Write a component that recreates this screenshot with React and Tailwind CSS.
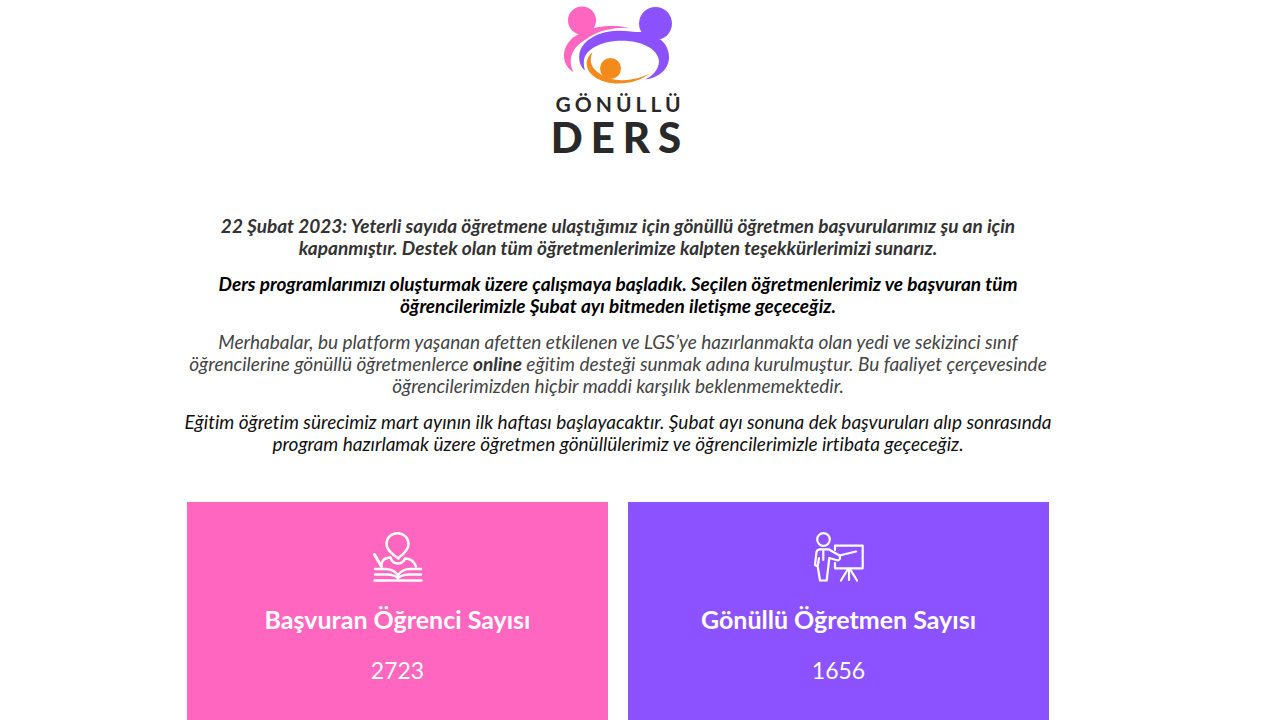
function LogoMark() {
  return (
    <svg viewBox="0 0 110 80" className="h-20 w-[110px]" aria-hidden="true">
      <g fill="#ff66c0">
        <circle cx="19" cy="16.500" r="14" />
        <path d="M10.500 68C4 64 0.500 58 1 50C2 42 6 35 16 30C24 24.500 38 22 48 22C56 22 61 22.500 65.500 23.700C58 23.500 50 24 42 26.300C32 29 26 33 19 38C10 44 4 55 10.500 68Z" />
      </g>
      <g fill="#8c52ff">
        <circle cx="92.500" cy="19.500" r="16.500" />
        <path d="M22 66.500C16.500 62 15 54 17 47C22 34 38 26.700 57 26.700C66 26.700 73 28.500 79 28L98 36C103 40 106.500 47 106 55C105 66 95 74 82 75.500C90 72 96 65 96 57C95 45 79 36.700 59 36.700C40 36.700 23 44 21 56C20.500 60 21 63 22 66.500Z" />
      </g>
      <g fill="#f28a1c">
        <circle cx="47.500" cy="64.500" r="10.500" />
        <path d="M29.300 48.500C25.500 58 29 65 38 70.500C44 74.500 52 76.500 60 76.200C71 75.800 80 73 87.500 69C79 75.500 68 79.500 55 79.500C38 79.500 24 71 23.700 60C23.600 55.500 26 51 29.300 48.500Z" />
      </g>
    </svg>
  );
}

function StudentIcon() {
  return (
    <svg viewBox="0 0 50 50" className="size-[50px]" fill="none" stroke="currentColor" strokeWidth="2.500" strokeLinecap="round" strokeLinejoin="round" aria-hidden="true">
      <path d="M25.500 26.500C20 23 13.500 17.500 13.500 12C13.500 5.500 18.500 1.200 24.500 1.200S35.500 5.500 35.500 12C35.500 17 32 21 25.500 26" />
      <path d="M8 34C9 29.500 10.500 27 13 26.300L17.500 25.500C18.500 29.500 21.500 31.500 25 31.500C29 31.500 31 29 32 26.500C37 26.500 41 29 43 34.500" />
      <path d="M1.500 22.500L8.500 34.500" strokeWidth="3" />
      <path d="M2 37H12C18 37 22 39 25 43C28 39 32 37 37 37H48M2 42.500H14C19 42.500 22 43.500 25 46C28 43.500 31 42.500 36 42.500H48M1.500 48.500H48.500" />
    </svg>
  );
}

function TeacherIcon() {
  return (
    <svg viewBox="0 0 50 50" className="size-[50px]" fill="none" stroke="currentColor" strokeWidth="2.200" strokeLinecap="round" strokeLinejoin="round" aria-hidden="true">
      <circle cx="9.500" cy="7.500" r="6.300" />
      <path d="M3.700 34.500L1 33L2.500 20C3 18 4 17.300 6 17.300H14.500L25.500 23.500L42 19.500M25.500 23.500C26.500 26 26 28 24 28.500L15.300 26L12.700 48.500H6L3.700 34.500L5 26M9.300 18V28" />
      <path d="M21 18V13.700H48.700V36.300H21V31M35 37V48M34 37L27 48.500M36 37L43 48.500" />
    </svg>
  );
}

function StatCard({ icon, title, value, color }) {
  return (
    <section className={`flex flex-1 flex-col items-center pt-[30px] pb-12 text-white ${color}`}>
      {icon}
      <h2 className="mt-[21px] text-[25px] leading-8 font-bold">{title}</h2>
      <p className="mt-[19px] text-[23px] leading-8">{value}</p>
    </section>
  );
}

export default function App() {
  return (
    <main className="mr-11 bg-white px-6 font-['Lato','Open_Sans',sans-serif] [font-variant-ligatures:none]">
      <div className="mx-auto max-w-[862px]">
        <header className="flex flex-col items-center pt-1">
          <LogoMark />
          <h1 className="flex flex-col items-center text-[#292929]">
            <span className="mt-2 pl-1 text-[21px] leading-6 font-bold tracking-[4px]">GÖNÜLLÜ</span>
            <span className="mt-[3px] pl-1 text-[42px] leading-9 font-black tracking-[8px]">DERS</span>
          </h1>
        </header>
        <div className="-mx-3 mt-[60px] space-y-[14px] text-center text-[19px] leading-[22px] italic">
          <p className="font-bold text-[#333333]">
            22 Şubat 2023: Yeterli sayıda öğretmene ulaştığımız için gönüllü öğretmen başvurularımız şu an için<br />
            kapanmıştır. Destek olan tüm öğretmenlerimize kalpten teşekkürlerimizi sunarız.
          </p>
          <p className="font-bold text-black">
            Ders programlarımızı oluşturmak üzere çalışmaya başladık. Seçilen öğretmenlerimiz ve başvuran tüm<br />
            öğrencilerimizle Şubat ayı bitmeden iletişme geçeceğiz.
          </p>
          <p className="text-[#444444]">
            Merhabalar, bu platform yaşanan afetten etkilenen ve LGS’ye hazırlanmakta olan yedi ve sekizinci sınıf<br />
            öğrencilerine gönüllü öğretmenlerce <strong className="font-bold text-[#333333]">online</strong> eğitim desteği sunmak adına kurulmuştur. Bu faaliyet çerçevesinde<br />
            öğrencilerimizden hiçbir maddi karşılık beklenmemektedir.
          </p>
          <p className="text-[#111111]">
            Eğitim öğretim sürecimiz mart ayının ilk haftası başlayacaktır. Şubat ayı sonuna dek başvuruları alıp sonrasında<br />
            program hazırlamak üzere öğretmen gönüllülerimiz ve öğrencilerimizle irtibata geçeceğiz.
          </p>
        </div>
        <div className="mt-[47px] flex gap-5">
          <StatCard icon={<StudentIcon />} title="Başvuran Öğrenci Sayısı" value="2723" color="bg-[#ff66c0]" />
          <StatCard icon={<TeacherIcon />} title="Gönüllü Öğretmen Sayısı" value="1656" color="bg-[#8c52ff]" />
        </div>
      </div>
    </main>
  );
}
